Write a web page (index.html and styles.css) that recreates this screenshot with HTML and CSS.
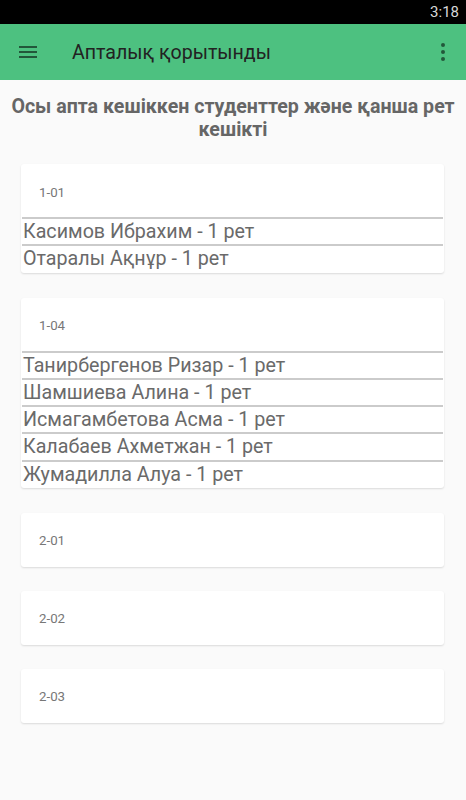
FILE: index.html
```html
<!DOCTYPE html>
<html lang="kk">
<head>
<meta charset="utf-8">
<title>Апталық қорытынды</title>
<link rel="stylesheet" href="styles.css">
</head>
<body>
<div class="status"><span class="time">3:18</span></div>
<header class="appbar">
  <svg class="menu" width="24" height="24" viewBox="0 0 24 24"><path d="M3 6h18v2H3zM3 11h18v2H3zM3 16h18v2H3z" fill="currentColor"/></svg>
  <h1 class="title">Апталық қорытынды</h1>
  <svg class="more" width="24" height="24" viewBox="0 0 24 24"><circle cx="12" cy="5" r="2" fill="currentColor"/><circle cx="12" cy="12" r="2" fill="currentColor"/><circle cx="12" cy="19" r="2" fill="currentColor"/></svg>
</header>
<main class="content">
  <h2 class="heading">Осы апта кешіккен студенттер және қанша рет кешікті</h2>
  <section class="card">
    <div class="card-head">1-01</div>
    <div class="row">Касимов Ибрахим - 1 рет</div>
    <div class="row">Отаралы Ақнұр - 1 рет</div>
  </section>
  <section class="card">
    <div class="card-head">1-04</div>
    <div class="row">Танирбергенов Ризар - 1 рет</div>
    <div class="row">Шамшиева Алина - 1 рет</div>
    <div class="row">Исмагамбетова Асма - 1 рет</div>
    <div class="row">Калабаев Ахметжан - 1 рет</div>
    <div class="row">Жумадилла Алуа - 1 рет</div>
  </section>
  <section class="card">
    <div class="card-head">2-01</div>
  </section>
  <section class="card">
    <div class="card-head">2-02</div>
  </section>
  <section class="card">
    <div class="card-head">2-03</div>
  </section>
</main>
</body>
</html>
```
FILE: styles.css
```css
* { box-sizing: border-box; }
html, body {
  margin: 0;
  padding: 0;
  background: #fafafa;
  font-family: Roboto, "Noto Sans", sans-serif;
  height: 800px;
}
.status {
  height: 24px;
  background: #000;
  display: flex;
  justify-content: flex-end;
  align-items: center;
  padding-right: 7px;
}
.time {
  color: #d8d8d8;
  font-size: 15px;
  line-height: 24px;
}
.appbar {
  height: 56px;
  background: #4dc180;
  display: flex;
  align-items: center;
  padding: 0 11px 0 16px;
  color: rgba(0,0,0,0.55);
}
.menu { flex: none; }
.more { flex: none; }
.title {
  flex: 1;
  margin: 0 0 0 32px;
  font-size: 19.6px;
  font-weight: 400;
  color: #222;
}
.content {
  padding-top: 15px;
}
.heading {
  margin: 0 0 23px;
  padding: 0 4px;
  text-align: center;
  font-size: 19.6px;
  line-height: 23px;
  font-weight: 700;
  color: #666;
}
.card {
  margin: 0 22px 24px 21px;
  background: #fff;
  border-radius: 3px;
  box-shadow: 0 1px 2px rgba(0,0,0,0.13);
  padding-bottom: 1px;
}
.card:nth-child(2), .card:nth-child(3) { margin-bottom: 25px; }
.card-head {
  height: 53px;
  padding: 3px 0 0 18px;
  display: flex;
  align-items: center;
  font-size: 13.3px;
  color: #777;
}
.row {
  margin: 0 1px;
  border-top: 2px solid #cbcbcb;
  padding-left: 1px;
  font-size: 19.7px;
  line-height: 25.25px;
  color: #6a6a6a;
}
```
